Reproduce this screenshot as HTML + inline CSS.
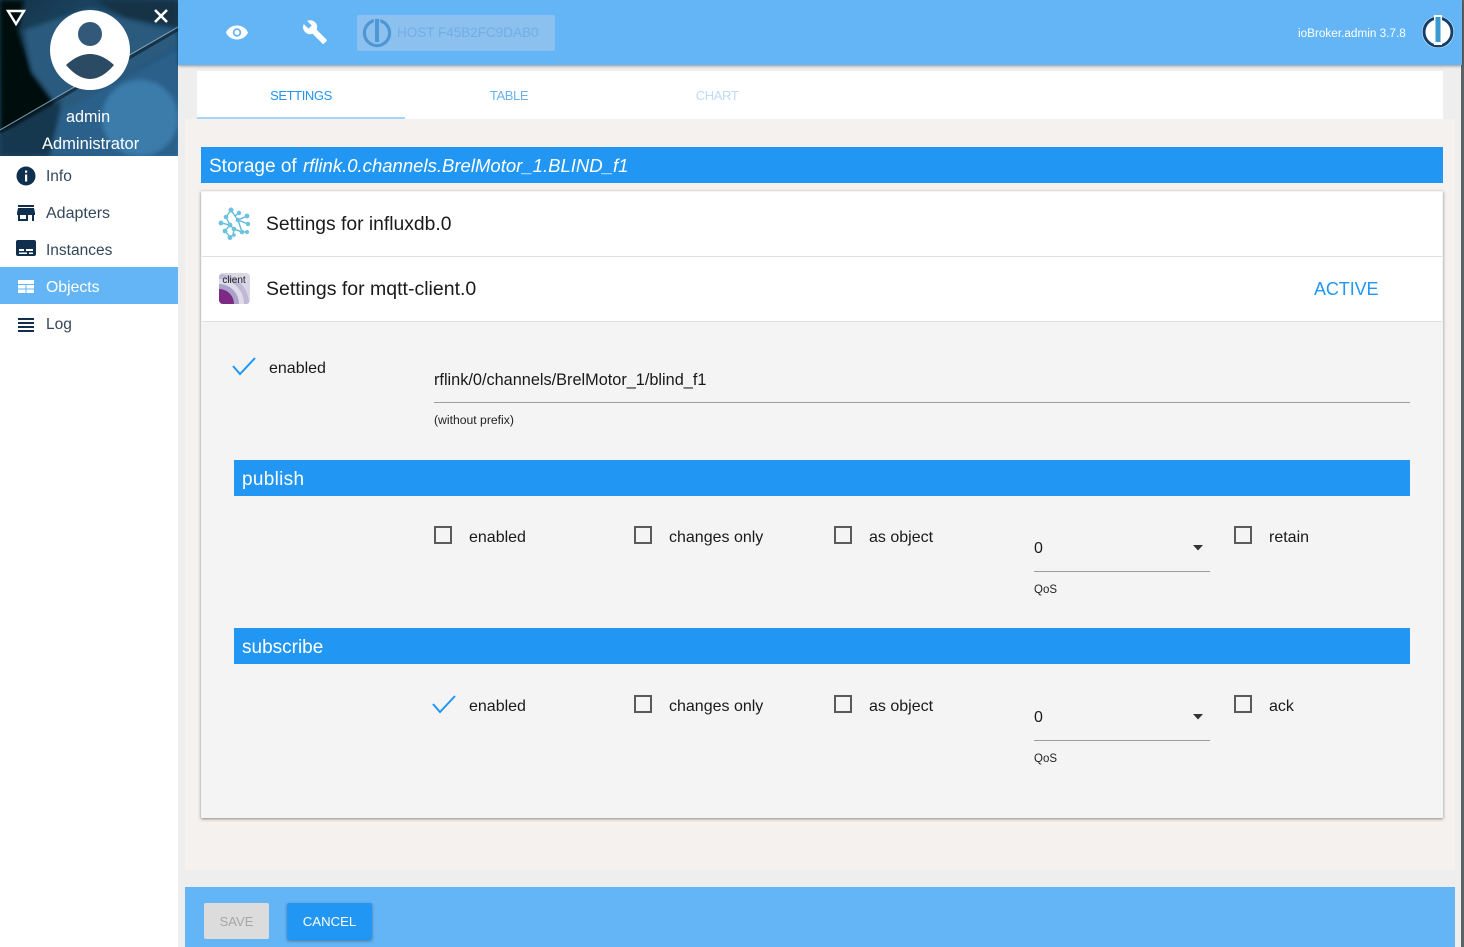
<!DOCTYPE html>
<html><head><meta charset="utf-8"><title>ioBroker.admin</title>
<style>
*{box-sizing:border-box}
html,body{margin:0;padding:0;width:1464px;height:947px;overflow:hidden;background:#eee;font-family:"Liberation Sans",Arial,sans-serif;color:#111}
.a{position:absolute;white-space:nowrap}
.t{position:absolute;white-space:nowrap;line-height:20px}
.bar{position:absolute;background:#2196f3;color:#fff;height:36px;line-height:38px;font-size:19px;padding-left:8px}
.cb{position:absolute;width:18px;height:18px;border:2px solid #5a5a5a}
.lbl{position:absolute;white-space:nowrap;font-size:16px;line-height:20px;color:#1a1a1a}
.nav{position:absolute;left:46px;font-size:15.5px;line-height:20px;color:#33475b;white-space:nowrap}
.tab{font-size:13px;letter-spacing:-.4px}
</style></head>
<body>
<!-- right strip -->
<div class="a" style="left:1461px;top:0;width:3px;height:947px;background:#5d6468"></div>
<!-- sidebar -->
<div class="a" style="left:0;top:0;width:178px;height:947px;background:#fff"></div>
<svg class="a" style="left:0;top:0" width="178" height="156" viewBox="0 0 178 156">
<defs>
<linearGradient id="g" x1="0" y1="0" x2="1" y2="1"><stop offset="0" stop-color="#143347"/><stop offset=".5" stop-color="#1f4f73"/><stop offset="1" stop-color="#2f6f9f"/></linearGradient>
<filter id="b"><feGaussianBlur stdDeviation="2"/></filter>
</defs>
<rect width="178" height="156" fill="url(#g)"/>
<g filter="url(#b)">
<path d="M0 0H24L18 30 32 72 60 108 0 132Z" fill="#02070b"/>
<path d="M24 30L90 8 178 35V45L62 112 32 72Z" fill="#2a5a7d"/>
<path d="M95 0H178V28L125 18Z" fill="#123044"/>
<path d="M0 134L60 100 62 156H0Z" fill="#14384f"/>
<path d="M50 156L60 112 178 50V156Z" fill="#2a608a"/>
<circle cx="140" cy="118" r="38" fill="#3a7cab"/>
</g>
<path d="M0 132L178 29" stroke="#0a1a26" stroke-width="4" fill="none" opacity=".6"/>
<path d="M0 130L178 27" stroke="#9dbfd2" stroke-width="1" fill="none" opacity=".8"/>
<circle cx="90" cy="50" r="40" fill="#fff"/>
<circle cx="90" cy="34" r="12" fill="#33597a"/>
<path d="M66 65Q90 43 114 65Q90 93 66 65Z" fill="#2b4a63"/>
<path d="M8 11H24L16 24Z" fill="none" stroke="#fff" stroke-width="2.400"/>
<path d="M155 10L167 22M167 10L155 22" stroke="#fff" stroke-width="2.600"/>
</svg>
<div class="t" style="left:66px;top:107px;font-size:16.200px;color:#fff">admin</div>
<div class="t" style="left:42px;top:134px;font-size:16.500px;color:#fff">Administrator</div>
<div class="a" style="left:0;top:267px;width:178px;height:37px;background:#64b5f6"></div>
<svg class="a" style="left:14px;top:164px" width="24" height="170" viewBox="0 0 24 170">
<g fill="#102f4f">
<path d="M12 2.500a9.500 9.500 0 1 0 0 19 9.500 9.500 0 0 0 0-19zM11 6.500h2.200v2.200H11zM11 10.500h2.200v7H11z" fill-rule="evenodd"/>
<path transform="translate(0,37)" d="M20 4H4v2h16V4zm1 10v-2l-1-5H4l-1 5v2h1v6h10v-6h4v6h2v-6h1zm-9 4H6v-4h6v4z"/>
<path d="M4 76h16a2 2 0 0 1 2 2v12a2 2 0 0 1-2 2H4a2 2 0 0 1-2-2V78a2 2 0 0 1 2-2zM5 85v2h5v-2zM12 85v2h7v-2zM5 88.500v1.500h8v-1.500zM15 88.500v1.500h4v-1.500z" fill-rule="evenodd"/>
<g fill="#fff"><path d="M4 116h16v4H4zM4 121h7.500v3.500H4zM12.500 121H20v3.500h-7.500zM4 125.500h7.500V129H4zM12.500 125.500H20V129h-7.500z"/></g>
<path d="M4 154h16v2H4zM4 158h16v2H4zM4 162h16v2H4zM4 166h16v2H4z"/>
</g></svg>
<div class="nav" style="top:167px">Info</div>
<div class="nav" style="top:204px;font-size:16px">Adapters</div>
<div class="nav" style="top:241px">Instances</div>
<div class="nav" style="top:278px;color:#fff;font-size:15.800px">Objects</div>
<div class="nav" style="top:315px">Log</div>

<!-- tabs & content -->
<div class="a" style="left:185px;top:119px;width:1270px;height:751px;background:#f5f1ee"></div>
<div class="a" style="left:197px;top:71px;width:1246px;height:48px;background:#fff"></div>
<div class="a" style="left:197px;top:117px;width:208px;height:2px;background:#a6d5fa"></div>
<div class="t tab" style="left:197px;width:208px;text-align:center;top:86px;color:#2196f3">SETTINGS</div>
<div class="t tab" style="left:405px;width:208px;text-align:center;top:86px;color:#6ab2ee">TABLE</div>
<div class="t tab" style="left:613px;width:208px;text-align:center;top:86px;color:#bcdcf7">CHART</div>

<!-- top bar -->
<div class="a" style="left:178px;top:0;width:1284px;height:65px;background:#64b5f6;box-shadow:0 1px 3px rgba(0,0,0,.4)"></div>
<svg class="a" style="left:225px;top:20px" width="24" height="24" viewBox="0 0 24 24"><path fill="#fff" fill-rule="evenodd" d="M12 5.500C7 5.500 2.700 8.300 1 12.500c1.700 4.200 6 7 11 7s9.300-2.800 11-7c-1.700-4.200-6-7-11-7zM12 8.300a4.200 4.200 0 1 1 0 8.400 4.200 4.200 0 0 1 0-8.400z"/><circle cx="12" cy="12.500" r="2.500" fill="#fff"/></svg>
<svg class="a" style="left:302px;top:19px" width="26" height="26" viewBox="0 0 24 24"><path fill="#fff" d="M22.700 19l-9.100-9.100c.9-2.300.4-5-1.500-6.900-2-2-5-2.400-7.400-1.300L9 6 6 9 1.600 4.700C.4 7.100.9 10.100 2.900 12.100c1.900 1.900 4.600 2.400 6.900 1.500l9.100 9.100c.4.400 1 .4 1.400 0l2.300-2.300c.5-.4.500-1.100.1-1.400z"/></svg>
<div class="a" style="left:357px;top:15px;width:198px;height:36px;background:#8bc0ef;border-radius:2px"></div>
<svg class="a" style="left:362px;top:18px" width="30" height="30" viewBox="0 0 30 30"><circle cx="15" cy="15" r="12.600" fill="none" stroke="#4f97d4" stroke-width="3.200"/><rect x="11.800" y="0" width="6.400" height="26" fill="#8bc0ef"/><rect x="13" y="1" width="4" height="23" fill="#4f97d4"/></svg>
<div class="t" style="left:397px;top:23px;font-size:13.500px;color:#73aee4">HOST F45B2FC9DAB0</div>
<div class="t" style="left:1298px;top:24px;font-size:11.750px;color:#fff">ioBroker.admin 3.7.8</div>
<svg class="a" style="left:1421px;top:15px" width="34" height="34" viewBox="0 0 34 34"><circle cx="17" cy="17" r="16" fill="#fff"/><circle cx="17" cy="17" r="14" fill="none" stroke="#153f6b" stroke-width="3"/><rect x="13" y="0" width="8" height="30" fill="#fff"/><rect x="14.500" y="2" width="5" height="25" fill="#3a9bd0"/></svg>

<!-- title -->
<div class="bar" style="left:201px;top:147px;width:1242px">Storage of <i style="font-size:18.550px;margin-left:1px">rflink.0.channels.BrelMotor_1.BLIND_f1</i></div>

<!-- card -->
<div class="a" style="left:201px;top:191px;width:1242px;height:627px;background:#f4f4f4;box-shadow:0 1px 3px rgba(0,0,0,.45)"></div>
<div class="a" style="left:202px;top:192px;width:1240px;height:129px;background:#fff"></div>
<div class="a" style="left:202px;top:256px;width:1240px;height:1px;background:#e0e0e0"></div>
<div class="a" style="left:202px;top:321px;width:1240px;height:1px;background:#e0e0e0"></div>

<svg class="a" style="left:217px;top:207px" width="34" height="34" viewBox="0 0 34 34">
<g stroke="#59b8d8" stroke-width="1.300" fill="none"><path d="M14 3L18 9 22 6M14 3L9 10 13 18 4 16M30 9L21 13 31 17M21 13L18 9M8 24L13 18M8 24L13 30 16 28 17 22 13 18M17 22L25 25 30 25M25 25L21 13"/></g>
<g fill="#6cc2df"><circle cx="14" cy="3" r="2.500"/><circle cx="22" cy="6" r="2.200"/><circle cx="9" cy="10" r="2.300"/><circle cx="30" cy="9" r="2.400"/><circle cx="21" cy="13" r="2.300"/><circle cx="31" cy="17" r="2.200"/><circle cx="4" cy="16" r="2.400"/><circle cx="13" cy="18" r="2.400"/><circle cx="8" cy="24" r="2.400"/><circle cx="17" cy="22" r="2.300"/><circle cx="25" cy="25" r="2.300"/><circle cx="30" cy="25" r="2"/><circle cx="13" cy="30.500" r="2.500"/><circle cx="17" cy="28" r="1.800"/></g></svg>
<svg class="a" style="left:219px;top:273px" width="31" height="31" viewBox="0 0 31 31"><defs><clipPath id="c"><rect width="31" height="31" rx="4"/></clipPath></defs><g clip-path="url(#c)"><rect width="31" height="31" fill="#d9d6e6"/><circle cx="0" cy="31" r="30" fill="#bfb9d6"/><circle cx="0" cy="31" r="25" fill="#dedbea"/><circle cx="0" cy="31" r="20" fill="#aaa2c8"/><circle cx="0" cy="31" r="15" fill="#7d2a84"/></g><text x="15" y="10" text-anchor="middle" font-size="10" font-family="Liberation Sans" fill="#222">client</text></svg>
<div class="t" style="left:266px;top:215px;font-size:19.300px;color:#1a1a1a">Settings for influxdb.0</div>
<div class="t" style="left:266px;top:279px;font-size:19.500px;color:#1a1a1a">Settings for mqtt-client.0</div>
<div class="t" style="left:1314px;top:279px;font-size:18px;letter-spacing:-.1px;color:#2196f3">ACTIVE</div>

<!-- check enabled top -->
<svg class="a" style="left:231px;top:356px" width="26" height="20" viewBox="0 0 26 20"><path d="M2 10l7 8L24 2" fill="none" stroke="#2196f3" stroke-width="2"/></svg>
<div class="lbl" style="left:269px;top:359px">enabled</div>
<div class="lbl" style="left:434px;top:370px;font-size:16.300px">rflink/0/channels/BrelMotor_1/blind_f1</div>
<div class="a" style="left:434px;top:402px;width:976px;height:1px;background:#9e9e9e"></div>
<div class="t" style="left:434px;top:410px;font-size:12.200px;color:#222">(without prefix)</div>

<!-- publish -->
<div class="bar" style="left:234px;top:461px;height:35px;width:1176px;letter-spacing:.3px">publish</div>
<div class="a" style="left:234px;top:460px;width:1176px;height:1px;background:#2196f3"></div>
<div class="cb" style="left:434px;top:526px"></div><div class="lbl" style="left:469px;top:528px">enabled</div>
<div class="cb" style="left:634px;top:526px"></div><div class="lbl" style="left:669px;top:528px">changes only</div>
<div class="cb" style="left:834px;top:526px"></div><div class="lbl" style="left:869px;top:528px">as object</div>
<div class="lbl" style="left:1034px;top:539px">0</div>
<svg class="a" style="left:1193px;top:545px" width="10" height="6" viewBox="0 0 10 6"><path d="M0 0h10L5 5.500z" fill="#333"/></svg>
<div class="a" style="left:1034px;top:571px;width:176px;height:1px;background:#9e9e9e"></div>
<div class="t" style="left:1034px;top:580px;font-size:11.500px;color:#222">QoS</div>
<div class="cb" style="left:1234px;top:526px"></div><div class="lbl" style="left:1269px;top:528px">retain</div>

<!-- subscribe -->
<div class="bar" style="left:234px;top:629px;height:35px;width:1176px">subscribe</div>
<div class="a" style="left:234px;top:628px;width:1176px;height:1px;background:#2196f3"></div>
<svg class="a" style="left:431px;top:694px" width="26" height="20" viewBox="0 0 26 20"><path d="M2 10l7 8L24 2" fill="none" stroke="#2196f3" stroke-width="2"/></svg>
<div class="lbl" style="left:469px;top:697px">enabled</div>
<div class="cb" style="left:634px;top:695px"></div><div class="lbl" style="left:669px;top:697px">changes only</div>
<div class="cb" style="left:834px;top:695px"></div><div class="lbl" style="left:869px;top:697px">as object</div>
<div class="lbl" style="left:1034px;top:708px">0</div>
<svg class="a" style="left:1193px;top:714px" width="10" height="6" viewBox="0 0 10 6"><path d="M0 0h10L5 5.500z" fill="#333"/></svg>
<div class="a" style="left:1034px;top:740px;width:176px;height:1px;background:#9e9e9e"></div>
<div class="t" style="left:1034px;top:749px;font-size:11.500px;color:#222">QoS</div>
<div class="cb" style="left:1234px;top:695px"></div><div class="lbl" style="left:1269px;top:697px">ack</div>

<!-- footer -->
<div class="a" style="left:185px;top:887px;width:1270px;height:60px;background:#64b5f6"></div>
<div class="a" style="left:204px;top:903px;width:65px;height:36px;background:#dcdcdc;border-radius:2px;color:#a6a6a6;font-size:13px;line-height:37px;text-align:center">SAVE</div>
<div class="a" style="left:287px;top:903px;width:85px;height:37px;background:#2196f3;border-radius:2px;color:#fff;font-size:13.200px;line-height:37px;text-align:center;box-shadow:0 1px 3px rgba(0,0,0,.35)">CANCEL</div>
</body></html>
